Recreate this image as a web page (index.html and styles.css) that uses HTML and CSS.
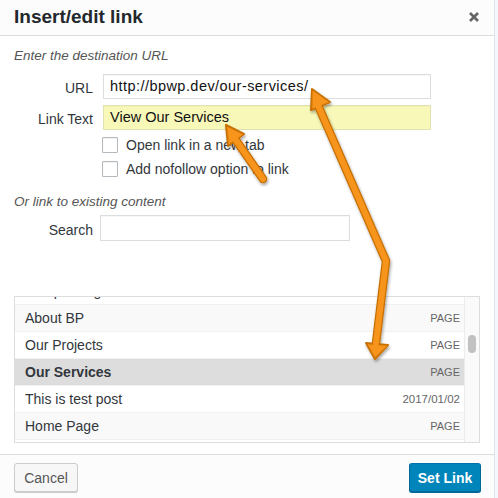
FILE: index.html
```html
<!DOCTYPE html>
<html>
<head>
<meta charset="utf-8">
<link rel="stylesheet" href="styles.css">
</head>
<body>
<div class="modal">
  <header class="head">
    <h1 class="title">Insert/edit link</h1>
    <svg class="close" width="12" height="12" viewBox="0 0 12 12"><path d="M2 2L10 10M10 2L2 10" stroke="#666" stroke-width="2.6" stroke-linecap="butt"/></svg>
  </header>
  <main class="body">
    <p class="hint hint-first">Enter the destination URL</p>
    <div class="field">
      <label class="lbl">URL</label>
      <div class="input input-url">http://bpwp.dev/our-services/</div>
    </div>
    <div class="field field-second">
      <label class="lbl">Link Text</label>
      <div class="input input-hl">View Our Services</div>
    </div>
    <div class="check first-check"><span class="box"></span><span>Open link in a new tab</span></div>
    <div class="check"><span class="box"></span><span>Add nofollow option to link</span></div>
    <p class="hint hint-second">Or link to existing content</p>
    <div class="field field-search">
      <label class="lbl">Search</label>
      <div class="input input-search"></div>
    </div>
    <div class="results">
      <ul class="list">
        <li class="row"><span>Sample Page</span><span class="meta">Page</span></li>
        <li class="row alt"><span>About BP</span><span class="meta">Page</span></li>
        <li class="row"><span>Our Projects</span><span class="meta">Page</span></li>
        <li class="row alt sel"><span>Our Services</span><span class="meta">Page</span></li>
        <li class="row"><span>This is test post</span><span class="meta date">2017/01/02</span></li>
        <li class="row alt"><span>Home Page</span><span class="meta">Page</span></li>
        <li class="row"><span>Blog</span><span class="meta">Page</span></li>
      </ul>
      <div class="track"><div class="thumb"></div></div>
    </div>
  </main>
  <footer class="foot">
    <button class="btn">Cancel</button>
    <button class="btn primary">Set Link</button>
  </footer>
</div>
<svg class="arrows" width="498" height="498" viewBox="0 0 498 498">
  <defs>
    <filter id="sh" x="-20%" y="-20%" width="140%" height="140%">
      <feDropShadow dx="1" dy="2" stdDeviation="1.5" flood-color="#000" flood-opacity="0.35"/>
    </filter>
  </defs>
  <g filter="url(#sh)" stroke-linejoin="round" stroke-linecap="round">
    <g stroke="#c77000" fill="#c77000">
      <path d="M263 179 L233 136" stroke-width="8.5" fill="none"/>
      <polygon points="226,125 244,134 228,146" stroke-width="2"/>
      <path d="M386 261 L317 103 M386 261 L376 343" stroke-width="8.5" fill="none"/>
      <polygon points="312,89 330,102 311,110" stroke-width="2"/>
      <polygon points="375,359 366,343 388,345" stroke-width="2"/>
    </g>
    <g stroke="#f7941d" fill="#f7941d">
      <path d="M263 179 L233 136" stroke-width="6" fill="none"/>
      <polygon points="227.5,127 242.5,134.5 229,144" stroke-width="0.5"/>
      <path d="M386 261 L317 103 M386 261 L376 343" stroke-width="6" fill="none"/>
      <polygon points="313,91 328.5,102 312.5,108.5" stroke-width="0.5"/>
      <polygon points="375,357 368,344.5 386.5,346" stroke-width="0.5"/>
    </g>
  </g>
</svg>
</body>
</html>
```

FILE: styles.css
```css
* { box-sizing: border-box; }
html, body { margin: 0; padding: 0; }
body {
  width: 498px;
  height: 498px;
  background: #f4f7fb;
  font-family: "Liberation Sans", Arial, sans-serif;
  color: #32373c;
  position: relative;
  overflow: hidden;
}
.modal {
  width: 495px;
  height: 498px;
  background: #fff;
  border-right: 1px solid #dde5ee;
  display: flex;
  flex-direction: column;
}
.head {
  height: 36px;
  background: #fcfcfc;
  border-bottom: 1px solid #ddd;
  display: flex;
  align-items: center;
  justify-content: space-between;
  padding: 0 14px 1px 14px;
}
.title {
  margin: 0;
  font-size: 19px;
  font-weight: bold;
  color: #23282d;
}
.body {
  flex: 1;
  padding: 0 14px;
  display: flex;
  flex-direction: column;
}
.hint {
  margin: 0;
  font-size: 13.5px;
  line-height: 16px;
  font-style: italic;
  color: #555;
}
.hint-first { margin-top: 12px; }
.hint-second { margin-top: 17px; }
.field {
  display: flex;
  align-items: center;
  margin-top: 10px;
}
.field-second { margin-top: 6px; }
.field-search { margin-top: 5px; }
.lbl {
  width: 79px;
  text-align: right;
  font-size: 14px;
  color: #32373c;
  margin-right: 10px;
  padding-top: 3px;
}
.field-search .lbl { margin-right: 7px; }
.input {
  width: 328px;
  height: 25px;
  border: 1px solid #ddd;
  background: #fff;
  font-size: 14.5px;
  line-height: 23px;
  padding: 0 6px;
  color: #111;
  box-shadow: inset 0 1px 1px rgba(0,0,0,0.03);
}
.input-url { letter-spacing: 0.45px; }
.input-hl { background: #f8f9b9; border-color: #e1e2b0; }
.input-search { width: 250px; height: 26px; }
.check {
  display: flex;
  align-items: center;
  margin-left: 88px;
  margin-top: 8px;
  font-size: 14px;
  line-height: 16px;
  color: #32373c;
}
.first-check { margin-top: 7px; }
.box {
  width: 16px;
  height: 16px;
  border: 1px solid #b4b9be;
  border-radius: 1px;
  background: #fff;
  margin-right: 8px;
  box-shadow: inset 0 1px 2px rgba(0,0,0,0.06);
}
.results {
  margin-top: 55px;
  height: 147px;
  border: 1px solid #ddd;
  display: flex;
  overflow: hidden;
}
.list {
  list-style: none;
  margin: -19px 0 0 0;
  padding: 0;
  flex: 1;
}
.row {
  height: 27px;
  border-bottom: 1px solid #f1f1f1;
  display: flex;
  align-items: center;
  justify-content: space-between;
  padding: 0 4px 0 10px;
  font-size: 14px;
  color: #32373c;
  background: #fff;
}
.row.alt { background: #f9f9f9; }
.row.sel { background: #dddddd; font-weight: bold; }
.meta {
  font-size: 11px;
  text-transform: uppercase;
  color: #666;
  font-weight: normal;
}
.meta.date { text-transform: none; font-size: 11.5px; }
.track {
  width: 15px;
  border-left: 1px solid #ececec;
  background: #fafafa;
  padding: 38px 3px 0 3px;
}
.thumb {
  width: 8px;
  height: 18px;
  border-radius: 4px;
  background: #c1c1c1;
}
.foot {
  height: 44px;
  border-top: 1px solid #ddd;
  background: #fcfcfc;
  display: flex;
  justify-content: space-between;
  align-items: flex-start;
  padding: 8px 13px 0 14px;
}
.btn {
  height: 29px;
  padding: 0;
  white-space: nowrap;
  font-family: "Liberation Sans", Arial, sans-serif;
  font-size: 14px;
  border: 1px solid #ccc;
  border-radius: 3px;
  background: #f7f7f7;
  color: #555;
  box-shadow: 0 1px 0 #ccc;
  width: 64px;
}
.btn.primary {
  background: #0085ba;
  border-color: #0073aa #006799 #006799;
  color: #fff;
  box-shadow: 0 1px 0 #006799;
  width: 72px;
  font-weight: bold;
}
.arrows {
  position: absolute;
  left: 0;
  top: 0;
  pointer-events: none;
}
```
